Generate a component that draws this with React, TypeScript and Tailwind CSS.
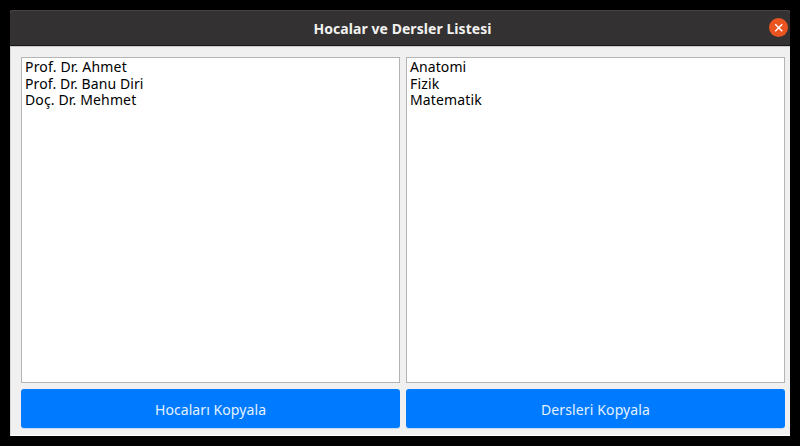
type ListItem = { text: string; style: string };
type ListPanelProps = { items: ListItem[]; action: string; actionStyle: string };

function ListPanel({ items, action, actionStyle }: ListPanelProps) {
  return (
    <section className="flex w-[379px] flex-col gap-1.5">
      <ul className="h-[326px] border border-[#b4b4b4] bg-white pl-[3px] pt-px text-[14px] leading-[16.5px] text-black">
        {items.map((item) => (
          <li key={item.text} className="flex h-[16.5px] whitespace-nowrap">
            <span className={item.style}>{item.text}</span>
          </li>
        ))}
      </ul>
      <button className="flex h-[39px] items-center justify-center rounded-[3px] bg-[#007bff] pt-0.5 text-[14px] text-[#e4f1ff] shadow-[0_1px_0_#c5dcf4]">
        <span className={actionStyle}>{action}</span>
      </button>
    </section>
  );
}

export default function App() {
  return (
    <div className="h-[446px] w-[800px] bg-black p-[10px] font-['Noto_Sans',sans-serif]">
      <main className="flex h-[426px] w-[780px] flex-col overflow-hidden rounded-t-[3px] bg-[#f0f0f0]">
        <header className="flex h-9 shrink-0 items-center border-b border-t border-b-[#191818] border-t-[#454343] bg-[#333132] pl-[26px] pr-[2.5px]">
          <h1 className="flex-1 text-center text-[14px] font-bold text-[#f2f1f0]">
            <span className="tracking-[0.06px]">Hocalar ve Dersler Listesi</span>
          </h1>
          <button aria-label="Kapat" className="mb-px flex size-[18.5px] items-center justify-center rounded-full bg-[#e95420]">
            <svg viewBox="0 0 10 10" className="size-[9.5px]" fill="none" stroke="#fff" strokeWidth="1.5">
              <path d="M1.3 1.3 8.7 8.7M8.7 1.3 1.3 8.7" />
            </svg>
          </button>
        </header>
        <div className="flex flex-1 gap-1.5 border-b border-l border-t border-b-white border-l-[#d8d8d8] border-t-[#c8c8c8] pl-[10px] pt-[10px]">
          <ListPanel
            items={[
              { text: "Prof. Dr. Ahmet", style: "tracking-[0.18px]" },
              { text: "Prof. Dr. Banu Diri", style: "tracking-[0.1px]" },
              { text: "Doç. Dr. Mehmet", style: "tracking-[0.14px]" },
            ]}
            action="Hocaları Kopyala"
            actionStyle="tracking-[0.08px]"
          />
          <ListPanel
            items={[
              { text: "Anatomi", style: "tracking-[0.08px]" },
              { text: "Fizik", style: "tracking-[0.15px]" },
              { text: "Matematik", style: "tracking-[0.14px]" },
            ]}
            action="Dersleri Kopyala"
            actionStyle="tracking-[0.13px]"
          />
        </div>
      </main>
    </div>
  );
}
